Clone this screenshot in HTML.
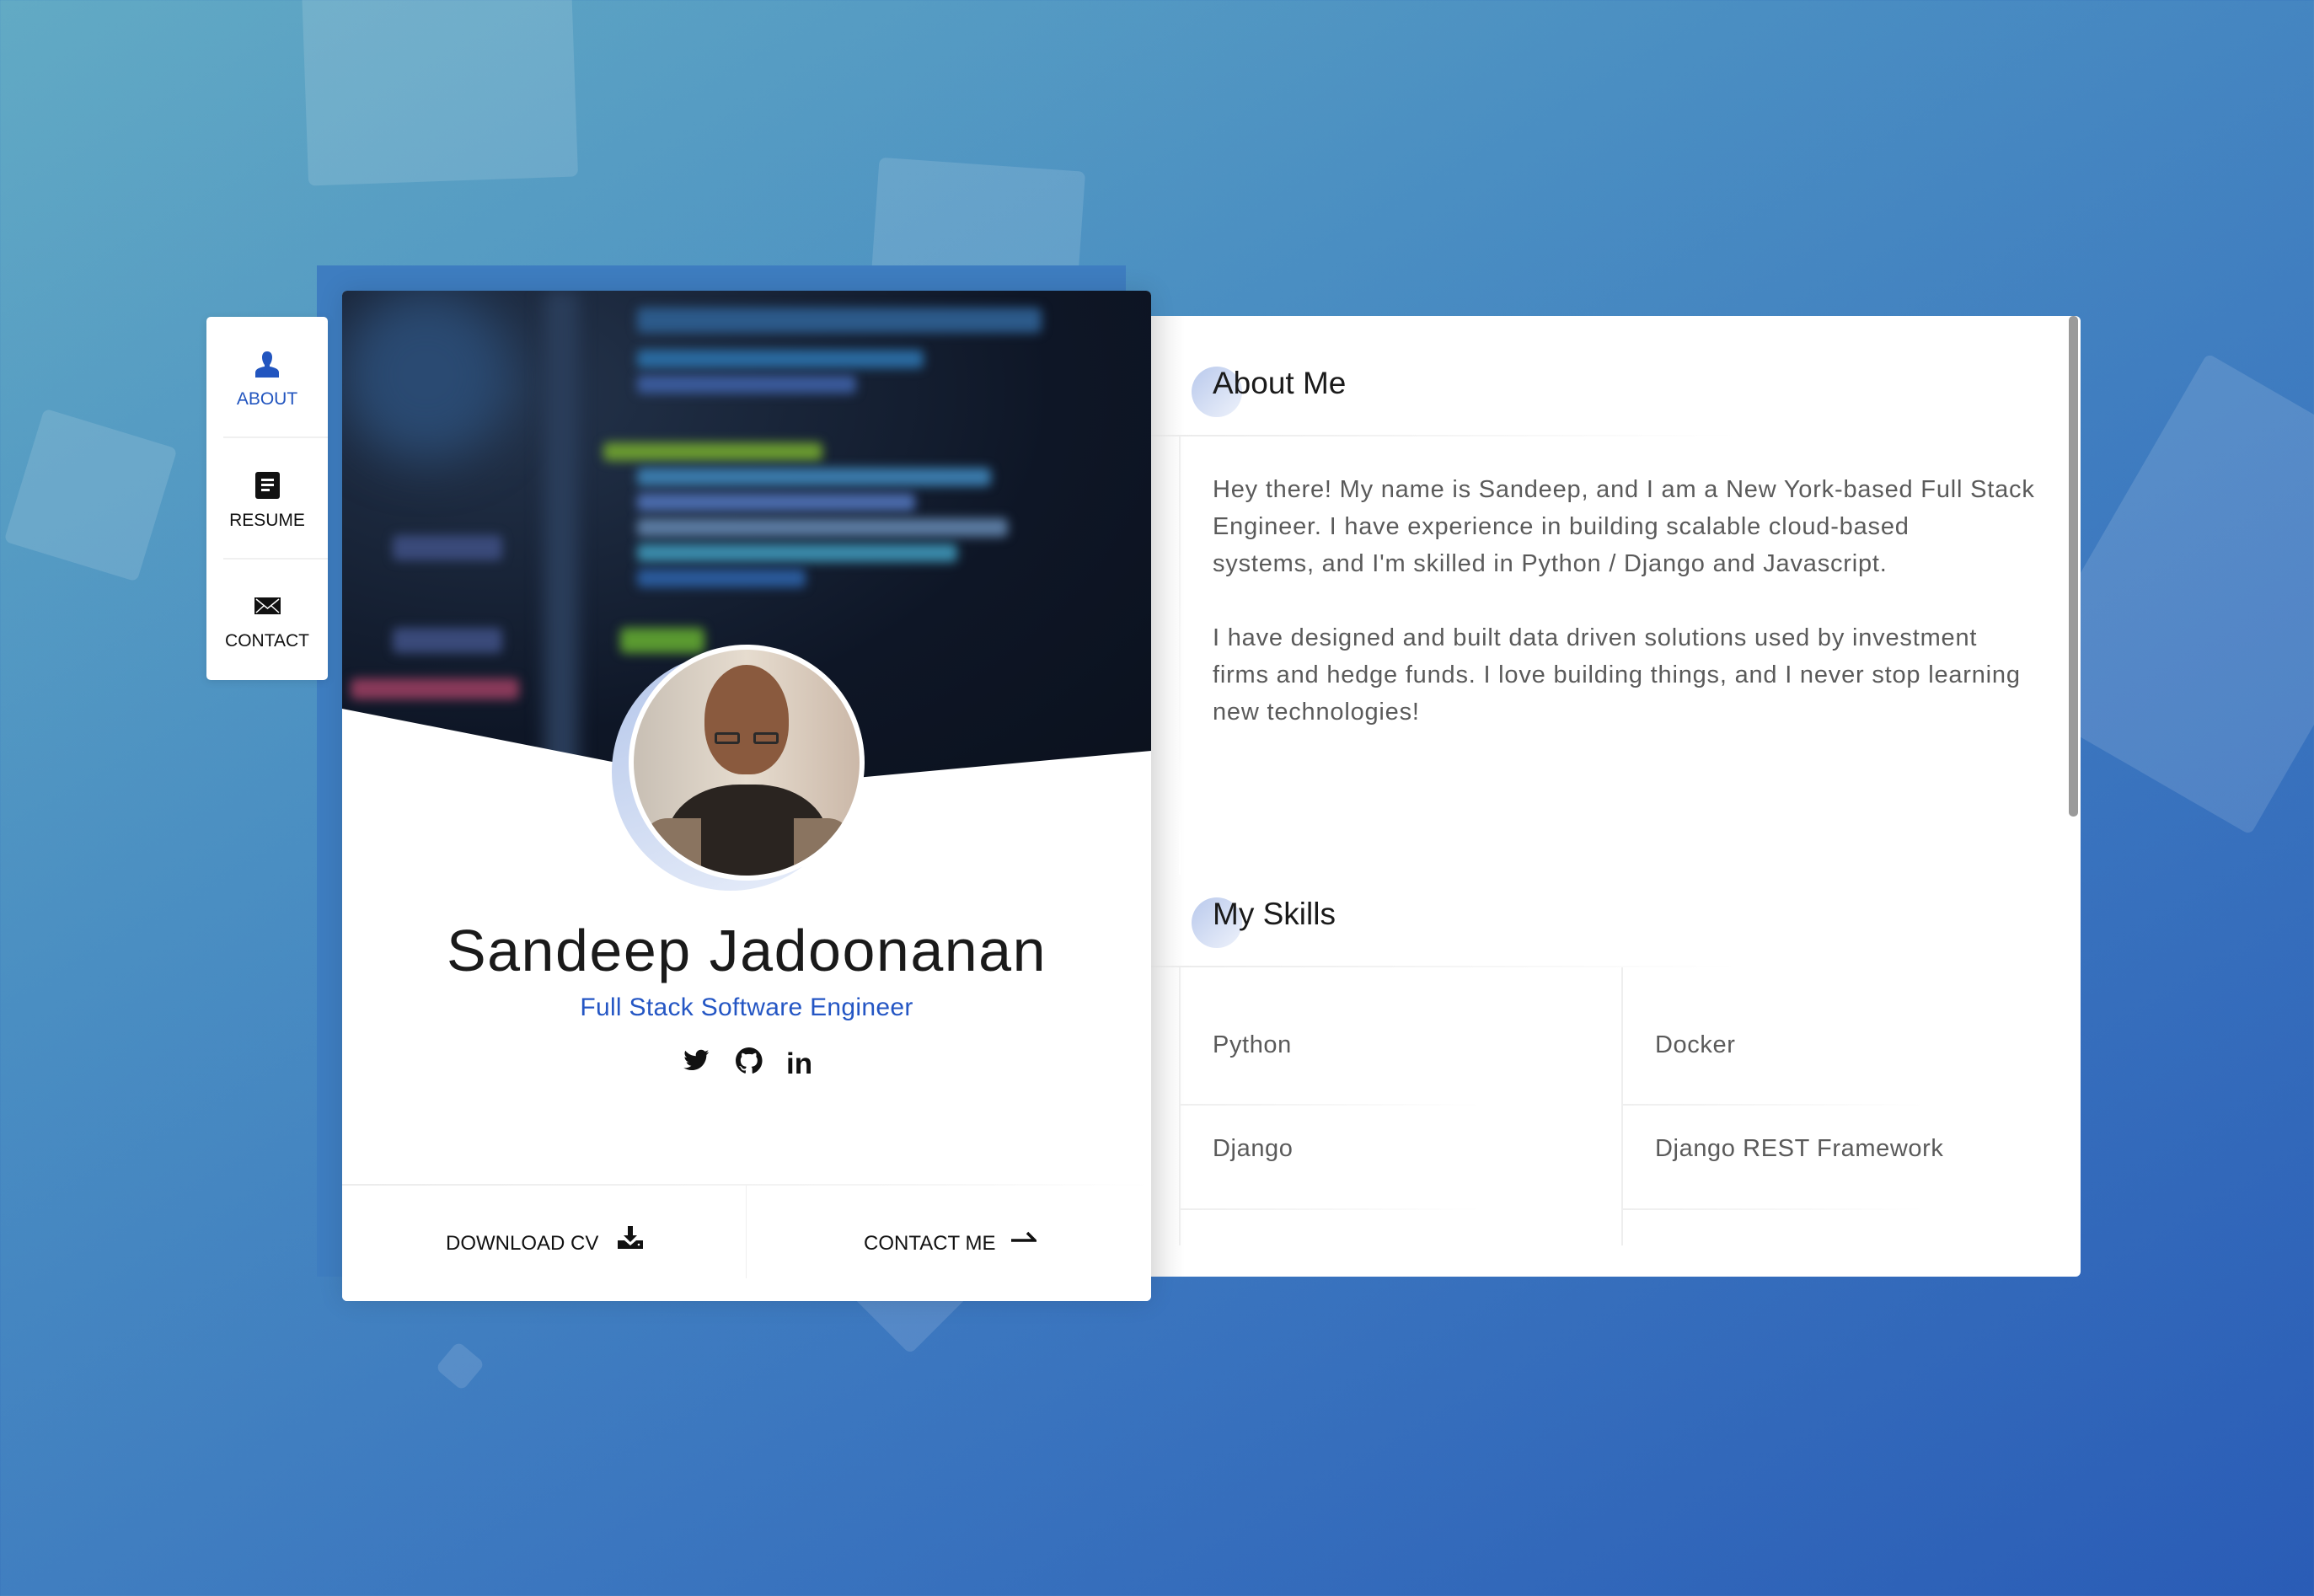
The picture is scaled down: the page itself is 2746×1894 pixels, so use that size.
<!DOCTYPE html>
<html><head><meta charset="utf-8"><style>
*{margin:0;padding:0;box-sizing:border-box}
body{width:2746px;height:1894px;overflow:hidden;position:relative;font-family:"Liberation Sans",sans-serif;
background:linear-gradient(150deg,#62aac4 0%,#4a8ec2 35%,#3b76bf 65%,#2a5cb6 100%)}
.sq{position:absolute;background:rgba(255,255,255,.13);border-radius:8px}
.abs{position:absolute}
.blob{position:absolute;filter:blur(6px);border-radius:6px}
</style></head><body>
<div class="sq" style="left:362px;top:-20px;width:320px;height:235px;transform:rotate(-2deg)"></div>
<div class="sq" style="left:1035px;top:195px;width:245px;height:240px;transform:rotate(4deg)"></div>
<div class="sq" style="left:25px;top:505px;width:165px;height:165px;transform:rotate(17deg)"></div>
<div class="sq" style="left:2480px;top:470px;width:330px;height:470px;transform:rotate(30deg)"></div>
<div class="sq" style="left:990px;top:1390px;width:180px;height:180px;transform:rotate(45deg)"></div>
<div class="sq" style="left:525px;top:1600px;width:42px;height:42px;transform:rotate(40deg)"></div>

<div class="abs" style="left:376px;top:315px;width:960px;height:1200px;background:#3e7dc0"></div>

<div class="abs" style="left:1366px;top:375px;width:1103px;height:1140px;background:#fff;border-radius:0 6px 6px 0;overflow:hidden">
  <div class="abs" style="left:0;top:0;width:40px;height:1140px;background:linear-gradient(90deg,#ececec,#fff)"></div>
  <div class="abs" style="left:1089px;top:0;width:11px;height:594px;background:#9a9a9a;border-radius:5px"></div>
  <div class="abs" style="left:48px;top:60px;width:60px;height:60px;border-radius:50%;background:linear-gradient(135deg,#b9c9ec,#eef2fb)"></div>
  <div class="abs" style="left:73px;top:59px;font-size:37px;color:#1a1a1a">About Me</div>
  <div class="abs" style="left:0;top:141px;width:700px;height:2px;background:linear-gradient(90deg,#eaeaea,#fff)"></div>
  <div class="abs" style="left:33px;top:143px;width:2px;height:520px;background:linear-gradient(#eee,#fff)"></div>
  <div class="abs" style="left:73px;top:184px;white-space:nowrap;font-size:29px;line-height:44px;color:#5a5a5a;letter-spacing:0.8px">Hey there! My name is Sandeep, and I am a New York-based Full Stack<br>Engineer. I have experience in building scalable cloud-based<br>systems, and I'm skilled in Python / Django and Javascript.<br><br>I have designed and built data driven solutions used by investment<br>firms and hedge funds. I love building things, and I never stop learning<br>new technologies!</div>
  <div class="abs" style="left:48px;top:690px;width:60px;height:60px;border-radius:50%;background:linear-gradient(135deg,#b9c9ec,#eef2fb)"></div>
  <div class="abs" style="left:73px;top:689px;font-size:37px;color:#1a1a1a">My Skills</div>
  <div class="abs" style="left:0;top:771px;width:700px;height:2px;background:linear-gradient(90deg,#eaeaea,#fff)"></div>
  <div class="abs" style="left:33px;top:773px;width:2px;height:330px;background:#eee"></div>
  <div class="abs" style="left:558px;top:773px;width:2px;height:330px;background:#eee"></div>
  <div class="abs" style="left:33px;top:935px;width:360px;height:2px;background:linear-gradient(90deg,#eee,#fff)"></div>
  <div class="abs" style="left:559px;top:935px;width:360px;height:2px;background:linear-gradient(90deg,#eee,#fff)"></div>
  <div class="abs" style="left:33px;top:1059px;width:360px;height:2px;background:linear-gradient(90deg,#eee,#fff)"></div>
  <div class="abs" style="left:559px;top:1059px;width:360px;height:2px;background:linear-gradient(90deg,#eee,#fff)"></div>
  <div class="abs" style="left:73px;top:849px;font-size:29px;color:#5a5a5a;letter-spacing:0.6px">Python</div>
  <div class="abs" style="left:598px;top:849px;font-size:29px;color:#5a5a5a;letter-spacing:0.6px">Docker</div>
  <div class="abs" style="left:73px;top:972px;font-size:29px;color:#5a5a5a;letter-spacing:0.6px">Django</div>
  <div class="abs" style="left:598px;top:972px;font-size:29px;color:#5a5a5a;letter-spacing:0.6px">Django REST Framework</div>
</div>

<div class="abs" style="left:406px;top:345px;width:960px;height:1199px;background:#fff;border-radius:6px;overflow:hidden;box-shadow:0 0 30px rgba(0,0,0,.12)">
  <div class="abs" style="left:0;top:0;width:960px;height:600px;background:radial-gradient(ellipse at 20% 20%,#24344c,#0e1626 60%,#0b111d);overflow:hidden">
    <div class="blob" style="left:0;top:0;width:200px;height:200px;background:#2a4a72;border-radius:50%;filter:blur(30px)"></div>
    <div class="blob" style="left:240px;top:0;width:40px;height:600px;background:#2a3d5a;filter:blur(10px)"></div>
    <div class="blob" style="left:350px;top:20px;width:480px;height:30px;background:#2c5a8a"></div>
    <div class="blob" style="left:350px;top:70px;width:340px;height:22px;background:#2a6aa0"></div>
    <div class="blob" style="left:350px;top:100px;width:260px;height:22px;background:#3a5a9a"></div>
    <div class="blob" style="left:310px;top:180px;width:260px;height:22px;background:#6a9a30"></div>
    <div class="blob" style="left:350px;top:210px;width:420px;height:22px;background:#3a7aaa"></div>
    <div class="blob" style="left:350px;top:240px;width:330px;height:22px;background:#4a6aaa"></div>
    <div class="blob" style="left:350px;top:270px;width:440px;height:22px;background:#5a7aa0"></div>
    <div class="blob" style="left:350px;top:300px;width:380px;height:22px;background:#3a8aaa"></div>
    <div class="blob" style="left:350px;top:330px;width:200px;height:22px;background:#2a5a9a"></div>
    <div class="blob" style="left:60px;top:290px;width:130px;height:30px;background:#3a4a7a"></div>
    <div class="blob" style="left:60px;top:400px;width:130px;height:30px;background:#3a4a7a"></div>
    <div class="blob" style="left:10px;top:460px;width:200px;height:25px;background:#8a3a5a"></div>
    <div class="blob" style="left:330px;top:400px;width:100px;height:30px;background:#5a9a30"></div>
  </div>
  <svg class="abs" style="left:0;top:0" width="960" height="1199"><polygon points="0,496 478,590 960,546 960,1199 0,1199" fill="#fff"/></svg>
  <div class="abs" style="left:320px;top:430px;width:282px;height:282px;border-radius:50%;background:linear-gradient(160deg,#b4c6ea,#e8eefa)"></div>
  <div class="abs" style="left:340px;top:420px;width:280px;height:280px;border-radius:50%;background:#fff;padding:6px">
    <div style="width:100%;height:100%;border-radius:50%;overflow:hidden;position:relative;background:linear-gradient(90deg,#c8bfb4,#e6dccf 50%,#cbb8a8)">
      <div class="abs" style="left:84px;top:18px;width:100px;height:130px;border-radius:50% 50% 45% 45%;background:#8a5a3e"></div>
      <div class="abs" style="left:96px;top:98px;width:30px;height:14px;border:3px solid #2a2a2a;border-radius:3px"></div>
      <div class="abs" style="left:142px;top:98px;width:30px;height:14px;border:3px solid #2a2a2a;border-radius:3px"></div>
      <div class="abs" style="left:40px;top:160px;width:190px;height:140px;border-radius:45% 45% 0 0;background:#2a2420"></div>
      <div class="abs" style="left:10px;top:200px;width:70px;height:100px;background:#8a7460;border-radius:30px 0 0 0"></div>
      <div class="abs" style="left:190px;top:200px;width:70px;height:100px;background:#8a7460;border-radius:0 30px 0 0"></div>
    </div>
  </div>
  <div class="abs" style="left:0;top:743px;width:960px;text-align:center;font-size:70px;color:#1a1a1a;letter-spacing:1.5px">Sandeep Jadoonanan</div>
  <div class="abs" style="left:0;top:834px;width:960px;text-align:center;font-size:30px;color:#2456c4;letter-spacing:0.3px">Full Stack Software Engineer</div>
  <svg class="abs" style="left:386px;top:896px" width="180" height="36" viewBox="0 0 180 36">
    <path d="M34 6c-1.2.6-2.5.9-3.8 1.1 1.4-.8 2.4-2.1 2.9-3.6-1.3.8-2.700 1.300-4.200 1.600-2.600-2.800-7-2.900-9.700-.3-1.700 1.600-2.500 4-2 6.300C11.800 10.800 6.900 8.300 3.600 4.200c-1.700 3-.9 6.800 2 8.800-1 0-2-.3-2.900-.8 0 3.200 2.200 5.900 5.300 6.600-1 .3-2 .3-3 .1.9 2.700 3.400 4.600 6.300 4.700-2.800 2.200-6.400 3.200-10 2.800C4.400 28.300 8 29.400 11.700 29.400c12.400 0 19.300-10.400 19.100-19.800C32.100 8.600 33.200 7.400 34 6z" transform="translate(18,2) scale(.92)" fill="#111"/>
    <path d="M16 1C7.7 1 1 7.7 1 16c0 6.6 4.3 12.2 10.3 14.2.7.1 1-.3 1-.7v-2.6c-4.2.9-5-1.8-5-1.8-.7-1.7-1.7-2.2-1.7-2.2-1.4-.9.1-.9.1-.9 1.5.1 2.3 1.6 2.3 1.6 1.3 2.3 3.5 1.6 4.4 1.2.1-1 .5-1.6.9-2-3.3-.4-6.8-1.7-6.8-7.4 0-1.6.6-3 1.5-4-.1-.4-.7-1.9.1-4 0 0 1.3-.4 4.1 1.5 1.2-.3 2.5-.5 3.8-.5s2.6.2 3.8.5c2.9-1.9 4.1-1.5 4.1-1.5.8 2.1.3 3.6.1 4 1 1 1.5 2.4 1.5 4 0 5.8-3.5 7-6.8 7.4.5.5 1 1.4 1 2.8v4.1c0 .4.3.9 1 .7C26.7 28.2 31 22.6 31 16 31 7.7 24.3 1 16 1z" transform="translate(80,1) scale(1.05)" fill="#111"/>
    <text x="141" y="33" font-family="Liberation Sans" font-weight="bold" font-size="35" fill="#111">in</text>
  </svg>
  <div class="abs" style="left:0;top:1060px;width:960px;height:2px;background:linear-gradient(90deg,#ececec,#f5f5f5 70%,#fff)"></div>
  <div class="abs" style="left:479px;top:1062px;width:1px;height:110px;background:#f0f0f0"></div>
  <div class="abs" style="left:123px;top:1117px;font-size:24px;color:#111">DOWNLOAD CV</div>
  <svg class="abs" style="left:326px;top:1108px" width="32" height="32" viewBox="0 0 32 32"><path d="M13 2h6v11h5l-8 8-8-8h5z" fill="#111"/><path d="M1 19h8l7 6 7-6h8v10H1z" fill="#111"/><circle cx="26" cy="24" r="1.3" fill="#fff"/></svg>
  <div class="abs" style="left:619px;top:1117px;font-size:24px;color:#111">CONTACT ME</div>
  <svg class="abs" style="left:794px;top:1110px" width="30" height="24" viewBox="0 0 30 24"><path d="M0 17h28l-9-9" stroke="#111" stroke-width="3.5" fill="none"/></svg>
</div>

<div class="abs" style="left:245px;top:376px;width:144px;height:431px;background:#fff;border-radius:5px;box-shadow:0 2px 10px rgba(0,0,0,.1)">
  <svg class="abs" style="left:57px;top:40px" width="30" height="32" viewBox="0 0 30 32"><path d="M15 1c4 0 6 3 6 7s-2 8-3 9l0 2c6 1 11 3 11 7v6H1v-6c0-4 5-6 11-7v-2c-1-1-3-5-3-9s2-7 6-7z" fill="#2255bf"/></svg>
  <div class="abs" style="left:0;top:86px;width:144px;text-align:center;font-size:21px;color:#2255bf">ABOUT</div>
  <div class="abs" style="left:20px;top:142px;width:124px;height:2px;background:#f0f0f0"></div>
  <svg class="abs" style="left:58px;top:184px" width="29" height="32" viewBox="0 0 29 32"><rect x="0" y="0" width="29" height="32" rx="3" fill="#111"/><rect x="7" y="8" width="15" height="3" fill="#fff"/><rect x="7" y="14" width="15" height="3" fill="#fff"/><rect x="7" y="20" width="10" height="3" fill="#fff"/></svg>
  <div class="abs" style="left:0;top:230px;width:144px;text-align:center;font-size:21px;color:#111">RESUME</div>
  <div class="abs" style="left:20px;top:286px;width:124px;height:2px;background:#f0f0f0"></div>
  <svg class="abs" style="left:57px;top:333px" width="31" height="20" viewBox="0 0 31 20"><rect width="31" height="20" fill="#111"/><path d="M2 2l13.5 11L29 2M2 18l9-8M29 18l-9-8" stroke="#fff" stroke-width="1.5" fill="none"/></svg>
  <div class="abs" style="left:0;top:373px;width:144px;text-align:center;font-size:21px;color:#111">CONTACT</div>
</div>
</body></html>
